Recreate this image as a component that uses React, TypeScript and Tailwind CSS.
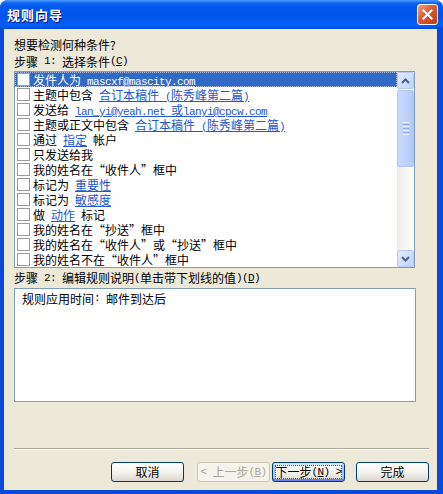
import React from 'react';

type Seg = { t: string; link?: boolean; mono?: boolean };

const T = (t: string): Seg => ({ t });
const L = (t: string): Seg => ({ t, link: true });
const M = (t: string, link = false): Seg => ({ t, mono: true, link });
const SP: Seg = { t: ' ', mono: true };

const rows: Seg[][] = [
  [T('发件人为'), SP, M('mascxf@mascity.com', true)],
  [T('主题中包含'), SP, L('合订本稿件'), M(' (', true), L('陈秀峰第二篇'), M(')', true)],
  [T('发送给'), SP, M('lan_yi@yeah.net ', true), L('或'), M('lanyi@cpcw.com', true)],
  [T('主题或正文中包含'), SP, L('合订本稿件'), M(' (', true), L('陈秀峰第二篇'), M(')', true)],
  [T('通过'), SP, L('指定'), SP, T('帐户')],
  [T('只发送给我')],
  [T('我的姓名在“收件人”框中')],
  [T('标记为'), SP, L('重要性')],
  [T('标记为'), SP, L('敏感度')],
  [T('做'), SP, L('动作'), SP, T('标记')],
  [T('我的姓名在“抄送”框中')],
  [T('我的姓名在“收件人”或“抄送”框中')],
  [T('我的姓名不在“收件人”框中')],
];

// half-width latin of the old bitmap font: 6px a glyph
const mono = "font-['Liberation_Mono',monospace] text-[11px] tracking-[-0.6px]";

// SimSun draws curly quotes full width: open quote hugs the right, close quote the left
function quotes(s: string) {
  return s.split(/([“”])/).map((p, i) =>
    p === '“' ? (
      <span key={i} className="inline-block w-[12px] text-right">“</span>
    ) : p === '”' ? (
      <span key={i} className="inline-block w-[12px] text-left">”</span>
    ) : (
      <React.Fragment key={i}>{p}</React.Fragment>
    )
  );
}

function Row({ segs, selected }: { segs: Seg[]; selected?: boolean }) {
  return (
    <div
      className={`flex h-[15px] items-center ${
        selected ? 'bg-[#316AC5] text-white outline-1 -outline-offset-1 outline-dotted outline-[#A8BCE4]' : 'text-black'
      }`}
    >
      <span className="ml-[2px] h-[13px] w-[13px] shrink-0 border border-[#9A9A9A] bg-white" />
      <span className="ml-[3px] h-[15px] whitespace-pre leading-[15px]">
        {segs.map((s, i) => (
          <span
            key={i}
            className={`${s.mono ? mono : ''} ${
              s.link ? (selected ? 'underline' : 'text-[#2456CC] underline') : ''
            }`}
          >
            {quotes(s.t)}
          </span>
        ))}
      </span>
    </div>
  );
}

function Arrow({ up }: { up?: boolean }) {
  return (
    <div className="flex h-[17px] w-[17px] items-center justify-center rounded-[2px] border border-[#B7CAF5] bg-[linear-gradient(to_bottom_right,#E2EBFE,#C1D3FB)]">
      <svg width="9" height="6" viewBox="0 0 9 6">
        <path
          d={up ? 'M1 5 L4.5 1.5 L8 5' : 'M1 1 L4.5 4.5 L8 1'}
          fill="none"
          stroke="#4D6185"
          strokeWidth="2"
        />
      </svg>
    </div>
  );
}

function Scrollbar() {
  return (
    <div className="flex w-[17px] shrink-0 flex-col bg-[linear-gradient(to_right,#EEEDE5,#FEFEFB)]">
      <Arrow up />
      <div className="mt-[1px] flex h-[77px] flex-col items-center justify-center gap-[1px] rounded-[2px] border border-[#B1C6F4] bg-[linear-gradient(to_right,#CAD8FC,#C0D2FB_50%,#B4C9F7)]">
        <span className="h-px w-[6px] bg-[#EEF4FE]" />
        <span className="h-px w-[6px] bg-[#8CB0F8]" />
        <span className="h-px w-[6px] bg-[#EEF4FE]" />
        <span className="h-px w-[6px] bg-[#8CB0F8]" />
        <span className="h-px w-[6px] bg-[#EEF4FE]" />
        <span className="h-px w-[6px] bg-[#8CB0F8]" />
        <span className="h-px w-[6px] bg-[#EEF4FE]" />
      </div>
      <div className="flex-1" />
      <Arrow />
    </div>
  );
}

function Btn({ children, disabled, focus, className = '' }: { children: React.ReactNode; disabled?: boolean; focus?: boolean; className?: string }) {
  return (
    <div
      className={`flex h-[20px] w-[73px] items-center justify-center whitespace-pre rounded-[3px] border text-[12px] leading-none ${className} ${
        disabled
          ? 'border-[#C9C7BA] bg-[#F5F4EA] text-[#ACA899]'
          : 'border-[#003C74] bg-[linear-gradient(to_bottom,#FFFFFF,#F3F2EE_55%,#DAD5CB)] text-black'
      } ${focus ? 'shadow-[inset_0_2px_#CEE7FF,inset_0_-2px_#6982EE,inset_2px_0_#A9C3F0,inset_-2px_0_#A9C3F0]' : ''}`}
    >
      {focus ? (
        <span className="flex h-[14px] w-[67px] items-center justify-center border border-dotted border-[#555]">{children}</span>
      ) : (
        children
      )}
    </div>
  );
}

export default function App() {
  return (
    <div lang="zh-CN" className="h-[494px] w-[443px] bg-white font-['Noto_Sans_CJK_SC','Noto_Sans',sans-serif] text-[12px] text-black">
      <div className="flex h-full flex-col overflow-hidden rounded-t-[8px] bg-[#0A4ADB]">
        {/* Title bar */}
        <div className="flex h-[29px] shrink-0 items-center justify-between bg-[linear-gradient(to_bottom,#4C9BFF_0px,#0E66F2_3px,#0058EE_7px,#0053E8_55%,#0060F6_88%,#0049D6_100%)] pl-[7px] pr-[5px]">
          <span className="text-[13px] font-bold tracking-[1px] text-white [text-shadow:1px_1px_#0F1089]">规则向导</span>
          <div className="flex h-[21px] w-[21px] items-center justify-center rounded-[3px] border border-white bg-[linear-gradient(to_bottom_right,#EFA083,#DA5A30_45%,#C23C16)]">
            <svg width="11" height="11" viewBox="0 0 11 11">
              <path d="M1.5 1.5 L9.5 9.5 M9.5 1.5 L1.5 9.5" stroke="white" strokeWidth="2" strokeLinecap="square" />
            </svg>
          </div>
        </div>

        {/* Frame + client */}
        <div className="flex flex-1 pb-[4px] pl-[4px] pr-[6px]">
          <div className="flex flex-1 flex-col bg-[#ECE9D8] pb-[8px] pl-[10px] pr-[8px] pt-[7px]">
            <div className="h-[17px] leading-[17px]">想要检测何种条件?</div>
            <div className="flex h-[17px] items-center whitespace-pre leading-[17px]">
              步骤<span className={mono}> 1: </span>选择条件<span className={mono}>(<u>C</u>)</span>
            </div>

            <div className="mt-[1px] flex h-[197px] w-[401px] border border-[#7F9DB9] bg-white">
              <div className="flex-1 overflow-hidden">
                {rows.map((r, i) => (
                  <Row key={i} segs={r} selected={i === 0} />
                ))}
              </div>
              <Scrollbar />
            </div>

            <div className="mt-[2px] flex h-[16px] items-center whitespace-pre leading-[16px]">
              步骤<span className={mono}> 2: </span>编辑规则说明<span className={mono}>(</span>单击带下划线的值
              <span className={mono}>)(<u>D</u>)</span>
            </div>
            <div className="mt-[2px] h-[114px] w-[402px] border border-[#7F9DB9] bg-white pl-[7px] pt-[2px]">
              <div className="flex h-[15px] items-center whitespace-pre leading-[15px]">
                规则应用时间<span className={mono}>: </span>邮件到达后
              </div>
            </div>

            <div className="mt-auto">
              <div className="h-px bg-[#ACA899]" />
              <div className="h-px bg-white" />
            </div>

            <div className="mt-[12px] flex justify-end">
              <Btn>取消</Btn>
              <Btn disabled className="ml-[13px]">
                <span className={mono}>&lt; </span>上一步<span className={mono}>(<u>B</u>)</span>
              </Btn>
              <Btn focus className="ml-[2px]">
                下一步<span className={mono}>(<u>N</u>) &gt;</span>
              </Btn>
              <Btn className="ml-[11px]">完成</Btn>
            </div>
          </div>
        </div>
      </div>
    </div>
  );
}
